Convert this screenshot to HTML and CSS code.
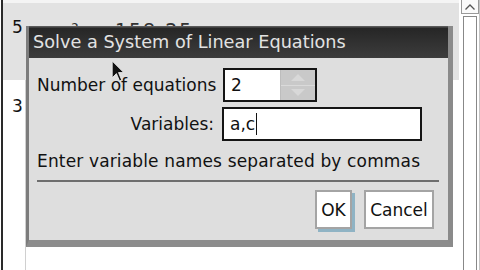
FILE: index.html
```html
<!DOCTYPE html>
<html>
<head>
<meta charset="utf-8">
<link rel="stylesheet" href="styles.css">
</head>
<body>
<div class="screen">
  <div class="doc">
    <div class="row row-sel">
      <span class="num">5</span>
      <span class="expr">π·r² ≈ 158.25</span>
    </div>
    <div class="row row-plain">
      <span class="num num-div">3</span>
    </div>
  </div>
  <div class="scroll">
    <div class="scroll-up">
      <svg width="12" height="8" viewBox="0 0 12 8"><path d="M1.5 6.5 L6 2 L10.5 6.5" fill="none" stroke="#555" stroke-width="1.3"/></svg>
    </div>
    <div class="scroll-track"></div>
  </div>

  <div class="dialog">
    <div class="dlg-title">Solve a System of Linear Equations</div>
    <div class="dlg-body">
      <div class="form">
        <label class="lbl">Number of equations</label>
        <div class="numbox">
          <span class="numval">2</span>
          <span class="spin">
            <span class="spin-half"><svg width="18" height="10" viewBox="0 0 18 10"><path d="M2 9 L9 2 L16 9 Z" fill="#d8d8d8"/></svg></span>
            <span class="spin-half"><svg width="18" height="10" viewBox="0 0 18 10"><path d="M2 1 L9 8 L16 1 Z" fill="#d8d8d8"/></svg></span>
          </span>
        </div>
        <label class="lbl">Variables:</label>
        <div class="textbox"><span class="txt">a,c</span><span class="caret"></span></div>
      </div>
      <div class="hint">Enter variable names separated by commas</div>
      <div class="sep"></div>
      <div class="buttons">
        <button class="btn btn-ok btn-focus">OK</button>
        <button class="btn btn-cancel">Cancel</button>
      </div>
    </div>
  </div>

  <svg class="cursor" width="15" height="22" viewBox="0 0 14 21"><path d="M1 1 L1 17 L5 13 L8 20 L10 19 L7 12 L12 12 Z" fill="#111" stroke="#eee" stroke-width="0.8"/></svg>
</div>
</body>
</html>
```
FILE: styles.css
```css
* { box-sizing: border-box; }
html, body { margin: 0; padding: 0; }
body {
  width: 480px;
  height: 270px;
  overflow: hidden;
  background: #fff;
  font-family: "DejaVu Sans", sans-serif;
  color: #111;
}
.screen {
  position: relative;
  width: 480px;
  height: 270px;
  display: flex;
}
.doc {
  flex: 0 0 458px;
  margin-left: 1px;
  border-left: 2px solid #2a2a2a;
  display: flex;
  flex-direction: column;
}
.row { display: flex; font-size: 17px; }
.row-sel {
  height: 80px;
  border-top: 3px solid #f4f4f4;
  background: #e2e2e2;
  padding-top: 15px;
}
.row-plain {
  flex: 1;
  background: #fff;
}
.num {
  width: 23px;
  padding-left: 9px;
  line-height: 18px;
}
.num-div {
  border-right: 1px solid #d0d0d0;
  padding-top: 17px;
}
.expr {
  padding-left: 14px;
  padding-top: 3px;
  line-height: 18px;
  color: #333;
  font-size: 19px;
  letter-spacing: 2px;
}
.scroll {
  flex: 0 0 19px;
  margin-left: 2px;
  display: flex;
  flex-direction: column;
  border-right: 1px solid #c4c4c4;
}
.scroll-up {
  height: 14px;
  border: 1px solid #999;
  border-top: none;
  background: #fafafa;
  display: flex;
  align-items: center;
  justify-content: center;
}
.scroll-track {
  flex: 1;
  margin: 2px 2px 0 2px;
  border: 1px solid #888;
  border-bottom: none;
  background: #fff;
}
.dialog {
  position: absolute;
  left: 26px;
  top: 26px;
  width: 427px;
  height: 221px;
  border-left: 3px solid #7c7c7c;
  border-right: 5px solid #8a8a8a;
  border-bottom: 7px solid #8c8c8c;
  background: #dedede;
  display: flex;
  flex-direction: column;
}
.dlg-title {
  height: 32px;
  line-height: 32px;
  padding-left: 4px;
  font-size: 17.7px;
  color: #e2e2e2;
  background: linear-gradient(#5a5a5a 0, #5a5a5a 1px, #262626 2px, #333 60%, #3c3c3c 100%);
  white-space: nowrap;
  overflow: hidden;
}
.dlg-body {
  flex: 1;
  padding: 10px 9px 0 8px;
  display: flex;
  flex-direction: column;
  font-size: 17px;
}
.form {
  display: grid;
  grid-template-columns: 177px auto;
  column-gap: 9px;
  row-gap: 5px;
  align-items: center;
}
.lbl { text-align: right; white-space: nowrap; }
.numbox {
  width: 94px;
  height: 34px;
  border: 2px solid #151515;
  background: #fff;
  display: flex;
}
.numval { flex: 1; padding-left: 6px; line-height: 30px; }
.spin {
  width: 35px;
  background: #c9c9c9;
  display: flex;
  flex-direction: column;
  border-left: 1px solid #bdbdbd;
}
.spin-half {
  flex: 1;
  display: flex;
  align-items: center;
  justify-content: center;
}
.spin-half + .spin-half { border-top: 1px solid #dadada; }
.textbox {
  margin-left: -1px;
  width: 200px;
  height: 34px;
  border: 2px solid #151515;
  background: #fff;
  display: flex;
  align-items: center;
  padding-left: 6px;
}
.txt { line-height: 30px; }
.caret {
  width: 1px;
  height: 22px;
  margin-left: 1px;
  background: #111;
}
.hint {
  margin-top: 10px;
  line-height: 20px;
  white-space: nowrap;
  letter-spacing: 0.15px;
}
.sep {
  margin-top: 9px;
  height: 2px;
  background: #6e6e6e;
}
.buttons {
  display: flex;
  justify-content: flex-end;
  gap: 12px;
  margin-top: 8px;
  padding-right: 5px;
}
.btn {
  font-family: "DejaVu Sans", sans-serif;
  font-size: 17px;
  color: #111;
  background: #fff;
  border: 2px solid #a4a4a4;
  height: 39px;
  margin: 0;
}
.btn-ok { width: 37px; padding: 0; }
.btn-cancel { width: 70px; padding: 0; }
.btn-focus {
  box-shadow: 3px 3px 0 #8fb3c4;
}
.cursor {
  position: absolute;
  left: 111px;
  top: 60px;
}
```
